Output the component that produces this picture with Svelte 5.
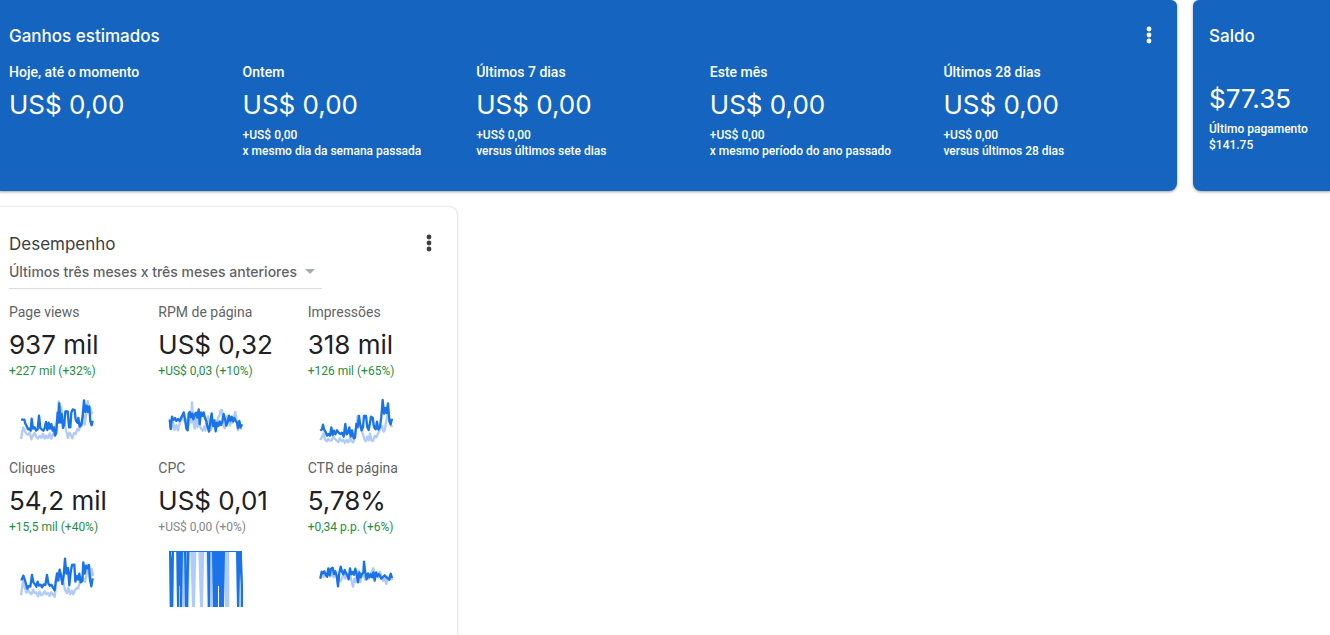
<script>
    const earnings = [
        { label: "Hoje, até o momento", value: "US$ 0,00" },
        {
            label: "Ontem",
            value: "US$ 0,00",
            change: "+US$ 0,00",
            note: "x mesmo dia da semana passada",
        },
        {
            label: "Últimos 7 dias",
            value: "US$ 0,00",
            change: "+US$ 0,00",
            note: "versus últimos sete dias",
        },
        {
            label: "Este mês",
            value: "US$ 0,00",
            change: "+US$ 0,00",
            note: "x mesmo período do ano passado",
        },
        {
            label: "Últimos 28 dias",
            value: "US$ 0,00",
            change: "+US$ 0,00",
            note: "versus últimos 28 dias",
        },
    ];

    // Sparklines share a 300 x 192 canvas: current period, then previous period
    const metrics = [
        {
            label: "Page views",
            value: "937 mil",
            change: "+227 mil (+32%)",
            trend: "up",
            now: "36,89 46,89 49,101 53,108 57,118 61,116 65,122 68,86 72,116 77,112 81,122 86,118 90,77 94,114 98,118 103,122 107,114 111,96 115,120 119,98 123,116 127,102 131,122 135,112 138,137 142,128 146,68 148,98 151,40 154,98 158,72 162,114 166,102 169,64 176,64 180,112 184,112 187,68 191,58 197,60 200,90 205,98 208,84 212,110 217,104 221,78 225,31 229,66 233,47 237,66 241,49 244,94 248,106 251,92",
            before: "36,147 39,130 43,112 47,122 52,132 57,134 62,128 67,148 72,136 77,129 82,141 87,145 92,138 97,144 102,131 107,146 112,137 117,144 122,130 127,146 132,134 137,122 141,100 145,89 149,34 153,67 157,52 161,88 165,91 169,112 173,128 177,144 181,128 185,134 190,145 195,129 200,132 205,116 210,121 214,104 218,108 223,71 227,104 232,69 236,33 240,60 244,54 248,70 251,66",
        },
        {
            label: "RPM de página",
            value: "US$ 0,32",
            change: "+US$ 0,03 (+10%)",
            trend: "up",
            now: "35,88 38,117 42,80 46,90 51,84 55,93 60,87 65,93 70,82 74,75 77,67 81,86 85,116 89,121 92,70 95,66 98,82 102,70 106,88 110,74 114,68 118,83 122,58 125,102 129,67 133,78 137,67 141,85 145,94 149,112 153,125 157,96 161,70 165,108 169,91 173,124 177,98 181,108 185,94 189,105 193,95 197,72 201,88 205,107 209,95 213,77 217,93 221,80 225,94 229,84 233,93 237,98 240,114 244,93 248,112 252,103",
            before: "35,105 40,116 45,98 50,120 55,105 60,121 65,99 70,89 74,73 78,92 82,98 86,89 90,117 94,85 99,98 102,37 106,97 110,116 114,80 118,112 122,91 126,109 130,117 134,122 138,110 142,122 146,90 150,79 155,102 159,120 164,89 168,107 172,92 176,112 180,83 184,78 188,61 192,60 196,102 200,115 204,98 208,78 212,96 216,107 220,89 224,98 228,80 232,66 236,91 240,121 244,98 248,116 252,117",
        },
        {
            label: "Impressões",
            value: "318 mil",
            change: "+126 mil (+65%)",
            trend: "up",
            now: "37,122 42,118 45,104 49,120 53,126 57,137 62,132 66,137 70,112 74,135 78,122 82,133 87,121 92,128 97,132 102,128 107,140 112,102 116,133 120,128 124,112 128,140 132,121 137,145 141,143 145,102 149,112 153,78 157,106 161,121 165,111 168,78 174,78 178,112 182,120 186,98 189,80 194,83 198,111 203,118 207,95 211,119 216,111 220,80 224,30 228,71 232,54 236,70 240,40 244,94 248,103 252,86",
            before: "37,150 42,140 47,130 51,149 56,154 61,146 66,152 71,151 76,140 81,147 86,152 91,156 96,145 101,154 106,149 111,159 116,150 121,157 126,145 131,154 136,157 141,135 145,110 149,78 153,102 157,104 161,122 165,134 169,146 173,154 178,140 182,151 186,131 190,151 195,153 200,138 205,142 210,130 214,122 218,113 222,107 227,125 231,118 235,89 239,77 243,82 248,103 252,112",
        },
        {
            label: "Cliques",
            value: "54,2 mil",
            change: "+15,5 mil (+40%)",
            trend: "up",
            now: "35,99 39,100 43,89 47,100 51,114 55,128 59,120 64,122 69,87 73,109 77,114 82,122 86,107 90,119 95,116 99,124 104,115 109,117 114,87 118,112 122,119 127,116 132,125 137,133 140,107 144,82 148,104 152,71 156,88 160,114 164,90 168,38 172,83 177,66 181,118 185,80 189,57 196,56 199,107 203,90 207,101 211,83 215,109 220,105 223,49 227,83 231,59 236,67 240,57 243,101 247,121 251,97",
            before: "36,148 39,127 42,105 47,123 52,140 57,132 62,140 67,145 72,131 77,141 82,139 87,151 92,137 97,148 102,145 107,135 112,145 117,141 122,150 127,139 132,145 137,153 141,115 145,98 149,79 153,83 157,102 161,90 165,119 169,134 174,141 178,125 183,145 188,134 193,145 198,132 203,126 208,127 213,105 218,93 223,98 228,107 232,91 236,56 240,82 244,104 248,69 252,90",
        },
        {
            label: "CPC",
            value: "US$ 0,01",
            change: "+US$ 0,00 (+0%)",
            trend: "flat",
        },
        {
            label: "CTR de página",
            value: "5,78%",
            change: "+0,34 p.p. (+6%)",
            trend: "up",
            now: "37,98 41,77 45,82 49,76 53,86 57,92 61,67 65,88 69,69 74,65 78,84 82,76 86,89 90,121 94,80 98,62 102,77 106,85 110,72 114,82 118,88 122,100 126,67 130,85 134,78 138,86 142,68 146,84 150,109 154,79 158,94 162,84 166,80 168,47 172,82 176,100 180,82 184,94 188,85 192,94 196,79 200,104 204,80 208,91 212,84 216,89 220,98 225,93 230,88 235,94 240,98 244,101 248,83 252,96",
            before: "37,94 42,82 47,93 52,81 57,93 62,79 67,92 72,78 77,94 82,87 87,93 92,103 97,106 102,96 107,84 112,98 117,81 122,98 127,91 131,106 135,122 139,98 143,108 147,88 152,74 157,108 162,83 167,90 172,101 177,84 182,98 187,85 192,76 196,67 201,84 206,78 211,94 216,77 221,93 226,105 231,98 235,114 239,92 243,103 248,85 252,103",
        },
    ];
</script>

{#snippet moreButton()}
    <button class="more" type="button" aria-label="Mais opções">
        <svg viewBox="0 0 24 24" width="24" height="24" aria-hidden="true">
            <circle cx="12" cy="6" r="2.4" />
            <circle cx="12" cy="12" r="2.4" />
            <circle cx="12" cy="18" r="2.4" />
        </svg>
    </button>
{/snippet}

<main class="dashboard">
    <div class="top-row">
        <section class="card blue earnings">
            <header class="card-head">
                <h2>Ganhos estimados</h2>
                {@render moreButton()}
            </header>
            <div class="earnings-grid">
                {#each earnings as item}
                    <div>
                        <div class="label">{item.label}</div>
                        <div class="value">{item.value}</div>
                        {#if item.change}
                            <div class="note">{item.change}</div>
                            <div class="note">{item.note}</div>
                        {/if}
                    </div>
                {/each}
            </div>
        </section>

        <section class="card blue balance">
            <header class="card-head">
                <h2>Saldo</h2>
            </header>
            <div class="value">$77.35</div>
            <div class="note">Último pagamento</div>
            <div class="note">$141.75</div>
        </section>
    </div>

    <section class="card performance">
        <header class="card-head">
            <h2>Desempenho</h2>
            {@render moreButton()}
        </header>
        <div class="period">
            <select aria-label="Período">
                <option>Últimos três meses x três meses anteriores</option>
            </select>
            <svg class="arrow" viewBox="0 0 10 5" width="10" height="5" aria-hidden="true">
                <path d="M0 0h10L5 5z" />
            </svg>
        </div>

        <div class="metrics">
            {#each metrics as metric}
                <div class="metric">
                    <div class="label">{metric.label}</div>
                    <div class="value">{metric.value}</div>
                    <div class="change" class:up={metric.trend === "up"}>
                        {metric.change}
                    </div>
                    <svg class="spark" viewBox="0 0 300 192" aria-hidden="true">
                        {#if metric.now}
                            <polyline class="before" points={metric.before} />
                            <polyline class="now" points={metric.now} />
                        {:else}
                            <path
                                class="bars-before"
                                d="M33 15h15v168H33zM54 15h42l-3 168H57zM97 18h18l-4 165h-9zM121 18h18l-4 165h-9zM145 15h20v168h-18zM198 18h16v165h-13zM235 15h17l3 168h-18z"
                            />
                            <path
                                class="bars-now"
                                d="M33 15h219v3H33zM33 18h6l3 20v-20h6l-3 165h-9zM55 18h20l-3 165h-6v-63h-3v63h-6zM78 18h6v60l2-60h8l-4 165h-9zM147 18h10l-1 165h-6zM162 18h39l-3 165h-15v-63h-3v63h-15zM234 18h18v20l3 82v63h-6v-63l-3-40-3 103h-6z"
                            />
                        {/if}
                    </svg>
                </div>
            {/each}
        </div>
    </section>
</main>

<style>
    :global(body) {
        margin: 0;
        background: #fff;
    }

    .dashboard {
        display: flex;
        flex-direction: column;
        gap: 16px;
        box-sizing: border-box;
        height: 100vh;
        overflow: hidden;
        font-family: Roboto, "Liberation Sans", sans-serif;
        color: #202124;
    }

    .top-row {
        display: grid;
        grid-template-columns: minmax(0, 1fr) 137px;
        gap: 16px;
    }

    .card {
        box-sizing: border-box;
        padding: 15px 0 0 9px;
        border-radius: 0 8px 8px 0;
        background: #fff;
        box-shadow:
            0 1px 2px rgba(60, 64, 67, 0.3),
            0 1px 3px 1px rgba(60, 64, 67, 0.15);
    }

    .blue {
        min-height: 191px;
        background: #1565c0;
        color: #fff;
    }

    .earnings {
        border-top-right-radius: 6px;
    }

    .balance {
        padding-left: 16px;
        border-radius: 6px 0 0 8px;
    }

    .card-head {
        display: flex;
        align-items: center;
        justify-content: space-between;
        height: 40px;
        padding-right: 8px;
    }

    h2 {
        margin: 0;
        padding-top: 2px;
        font: 500 17px/24px Inter, Roboto, sans-serif;
    }

    .more {
        display: grid;
        place-items: center;
        width: 40px;
        height: 40px;
        padding: 0;
        border: 0;
        background: none;
        color: inherit;
        cursor: pointer;
    }

    .more svg {
        fill: currentColor;
    }

    .earnings-grid {
        display: grid;
        grid-template-columns: repeat(5, 1fr);
        padding-top: 7px;
    }

    .label {
        font-size: 14px;
        line-height: 20px;
    }

    .value {
        padding: 5px 0 4px;
        font: 400 26px/36px Inter, Roboto, sans-serif;
        white-space: nowrap;
    }

    .note {
        font-size: 12px;
        line-height: 16px;
        white-space: nowrap;
    }

    .blue .label,
    .blue .note {
        font-weight: 500;
    }

    .balance .value {
        padding-top: 26px;
    }

    .performance {
        flex: 1;
        width: 457px;
        max-width: 100%;
        padding-top: 16px;
        border-radius: 0 8px 0 0;
        box-shadow:
            0 0 2px rgba(60, 64, 67, 0.3),
            0 1px 3px rgba(60, 64, 67, 0.15);
    }

    .performance h2,
    .performance .more {
        color: #3c4043;
    }

    .performance h2 {
        font-weight: 400;
    }

    .period {
        display: flex;
        align-items: center;
        width: 313px;
        height: 25px;
        border-bottom: 1px solid #dadce0;
    }

    select {
        flex: 1;
        min-width: 0;
        height: 20px;
        padding: 0;
        border: 0;
        margin-bottom: 8px;
        background: none;
        appearance: none;
        color: #5f6368;
        font: 500 14px/20px Inter, Roboto, sans-serif;
    }

    .arrow {
        flex: none;
        margin: 0 7px 8px 0;
        fill: #a8abae;
    }

    .metrics {
        display: grid;
        grid-template-columns: repeat(3, 1fr);
        padding-top: 13px;
    }

    .metric {
        height: 156px;
    }

    .metric .label {
        color: #5f6368;
    }

    .metric .value {
        padding-bottom: 0;
    }

    .change {
        color: #80868b;
        font-size: 12px;
        line-height: 16px;
    }

    .change.up {
        color: #1e8e3e;
    }

    .spark {
        display: block;
        width: 100px;
        height: 64px;
        margin-top: 11px;
        overflow: visible;
    }

    .spark polyline {
        fill: none;
        stroke-width: 7;
        stroke-linejoin: round;
    }

    .before {
        stroke: #aecbfa;
    }

    .now {
        stroke: #1a73e8;
    }

    .bars-before {
        fill: #aecbfa;
    }

    .bars-now {
        fill: #1a73e8;
    }
</style>
